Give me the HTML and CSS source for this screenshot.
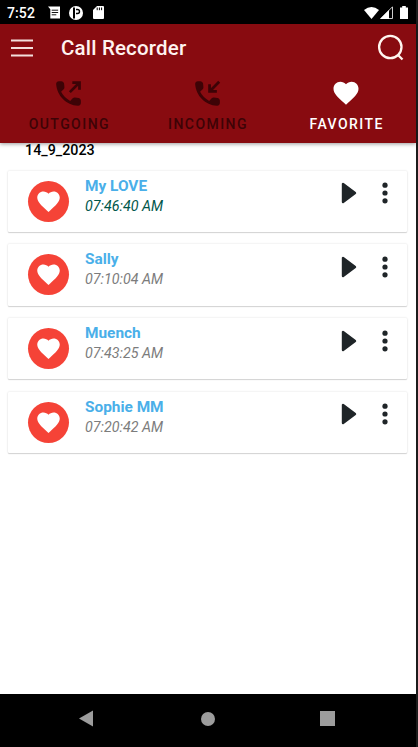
FILE: index.html
```html
<!DOCTYPE html>
<html lang="en">
<head>
<meta charset="utf-8">
<title>Call Recorder</title>
<link rel="stylesheet" href="styles.css">
</head>
<body>
<svg class="defs" aria-hidden="true">
  <symbol id="heart" viewBox="0 0 24 24"><path d="M12 21.35l-1.45-1.32C5.4 15.36 2 12.28 2 8.5 2 5.42 4.42 3 7.5 3c1.74 0 3.41.81 4.5 2.09C13.09 3.81 14.76 3 16.5 3 19.58 3 22 5.42 22 8.5c0 3.78-3.4 6.86-8.55 11.54L12 21.35z"/></symbol>
  <symbol id="phone" viewBox="0 0 24 24"><path d="M19.23 15.26l-2.54-.29c-.61-.07-1.21.14-1.64.57l-1.84 1.84c-2.83-1.44-5.15-3.75-6.59-6.59l1.85-1.85c.43-.43.64-1.03.57-1.64l-.29-2.52c-.12-1.01-.97-1.77-1.99-1.77H5.03c-1.13 0-2.07.94-2 2.07.53 8.54 7.36 15.36 15.89 15.89 1.13.07 2.07-.87 2.07-2v-1.73c.01-1.01-.75-1.86-1.76-1.98z"/></symbol>
  <symbol id="play" viewBox="0 0 16 22"><path d="M2 2v18l12-9z" stroke="currentColor" stroke-width="2.4" stroke-linejoin="round"/></symbol>
  <symbol id="more" viewBox="0 0 6 22"><circle cx="3" cy="3.2" r="2.6"/><circle cx="3" cy="11" r="2.6"/><circle cx="3" cy="18.8" r="2.6"/></symbol>
</svg>
<div class="screen">
  <div class="status">
    <span class="clock">7:52</span>
    <svg class="s-msg" viewBox="0 0 13 13"><path d="M0 0h13v13H2.500V3z"/><path d="M4 4h7M4 6.500h7M4 9h5" stroke="#000" stroke-width="1"/></svg>
    <svg class="s-app" viewBox="0 0 14 14"><circle cx="7" cy="7" r="7"/><path d="M5 1.500v11" fill="none" stroke="#000" stroke-width="2"/><path d="M7 3.500h1.500a2 2 0 0 1 0 4H7" fill="none" stroke="#000" stroke-width="1.400"/></svg>
    <svg class="s-sd" viewBox="0 0 11 13"><path d="M4 0h6q1 0 1 1v11q0 1-1 1H1q-1 0-1-1V4z"/><path d="M4.200 1.500v2.700M6.400 1.500v2.700M8.600 1.500v2.700" stroke="#000"/></svg>
    <svg class="s-wifi" viewBox="0 0 15 12"><path d="M0 3Q7.500-3 15 3L7.500 12z"/></svg>
    <svg class="s-cell" viewBox="0 0 13 13"><path d="M.8 12.500L12.500.8v11.700z" fill="none" stroke="#ccc"/><path d="M0 13L9 4v9z"/></svg>
    <svg class="s-bat" viewBox="0 0 8 13"><path d="M2.200 0h3.600v1.500H8V13H0V1.500h2.200z"/></svg>
  </div>
  <header class="header">
    <div class="appbar">
      <svg class="menu" viewBox="0 0 22 18"><path d="M0 1.500h22M0 9h22M0 16.500h22"/></svg>
      <h1>Call Recorder</h1>
      <svg class="search" viewBox="0 0 28 28"><circle cx="13.300" cy="13" r="11.200"/><path d="M20.500 20.500l5 5"/></svg>
    </div>
    <nav class="tabs">
      <div class="tab">
        <svg class="call" viewBox="0 0 24 24"><use href="#phone"/><path class="arrow" d="M13 11L20 4M14.800 4h5.200v5.200"/></svg>
        <span>OUTGOING</span>
      </div>
      <div class="tab">
        <svg class="call" viewBox="0 0 24 24"><use href="#phone"/><path class="arrow" d="M20.500 3.500L13.500 10.500M13.500 5.200v5.300h5.300"/></svg>
        <span>INCOMING</span>
      </div>
      <div class="tab active">
        <svg class="fav"><use href="#heart"/></svg>
        <span>FAVORITE</span>
      </div>
    </nav>
  </header>
  <main class="list">
    <h2>14_9_2023</h2>
    <article class="card">
      <div class="avatar"><svg><use href="#heart"/></svg></div>
      <div class="info"><strong>My LOVE</strong><em class="fresh">07:46:40 AM</em></div>
      <svg class="play"><use href="#play"/></svg>
      <svg class="more"><use href="#more"/></svg>
    </article>
    <article class="card">
      <div class="avatar"><svg><use href="#heart"/></svg></div>
      <div class="info"><strong>Sally</strong><em>07:10:04 AM</em></div>
      <svg class="play"><use href="#play"/></svg>
      <svg class="more"><use href="#more"/></svg>
    </article>
    <article class="card">
      <div class="avatar"><svg><use href="#heart"/></svg></div>
      <div class="info"><strong>Muench</strong><em>07:43:25 AM</em></div>
      <svg class="play"><use href="#play"/></svg>
      <svg class="more"><use href="#more"/></svg>
    </article>
    <article class="card">
      <div class="avatar"><svg><use href="#heart"/></svg></div>
      <div class="info"><strong>Sophie MM</strong><em>07:20:42 AM</em></div>
      <svg class="play"><use href="#play"/></svg>
      <svg class="more"><use href="#more"/></svg>
    </article>
  </main>
  <footer class="navbar">
    <svg class="back" viewBox="0 0 14 16"><path d="M14 0v16L0 8z"/></svg>
    <span class="home"></span>
    <span class="recent"></span>
  </footer>
</div>
</body>
</html>
```
FILE: styles.css
```css
* { box-sizing: border-box; }
body {
  margin: 0;
  background: #1c1c1c;
  font-family: Roboto, "Liberation Sans", sans-serif;
}
svg { display: block; flex: none; fill: currentColor; }
.defs { display: none; }
.screen {
  width: 416px;
  height: 747px;
  display: flex;
  flex-direction: column;
  background: #fff;
}
.status {
  height: 24px;
  flex: none;
  display: flex;
  align-items: center;
  padding: 1px 8px 0 7px;
  background: #000;
  color: #fff;
}
.clock { width: 41px; font-size: 14px; font-weight: 500; line-height: 24px; padding-top: 1px; letter-spacing: .1px; }
.s-msg { width: 12px; height: 13px; }
.s-app { width: 14px; height: 14px; margin-left: 9px; }
.s-sd { width: 11px; height: 13px; margin-left: 10px; }
.s-wifi { width: 15px; height: 12px; margin-left: auto; }
.s-cell { width: 13px; height: 13px; margin-left: 1px; }
.s-bat { width: 8px; height: 13px; margin-left: 7px; }
.header {
  height: 119px;
  flex: none;
  background: #880b10;
  box-shadow: 0 1px 4px rgba(0, 0, 0, .4);
}
.appbar {
  height: 47px;
  display: flex;
  align-items: center;
  padding: 0 11px;
  color: #fff;
}
.menu { width: 22px; height: 18px; fill: none; stroke: #f3dfdc; stroke-width: 2; }
h1 { margin: 0 0 0 28px; font-size: 20.5px; font-weight: 500; line-height: 24px; letter-spacing: .18px; color: #fff3f0; }
.search { width: 28px; height: 28px; margin-left: auto; fill: none; stroke: #fff5ef; stroke-width: 2.3; }
.tabs { display: grid; grid-template-columns: repeat(3, 1fr); height: 72px; }
.tab {
  display: flex;
  flex-direction: column;
  align-items: center;
  color: #3d0306;
}
.tab.active { color: #fff; }
.tab span { margin-top: auto; margin-bottom: 10px; font-size: 14px; font-weight: 500; line-height: 18px; letter-spacing: 1.45px; }
.call { width: 33px; height: 33px; margin: 6px 1px 0 0; }
.fav { width: 30px; height: 30px; margin: 7px 1px 0 0; }
.arrow { fill: none; stroke: currentColor; stroke-width: 2; }
.list {
  flex: 1;
  padding: 0 9px 0 8px;
  display: flex;
  flex-direction: column;
}
h2 { margin: 0 0 12.7px; height: 15px; padding-left: 17px; font-size: 14.3px; font-weight: 500; line-height: 15px; color: #000; }
.card {
  height: 61.3px;
  margin-bottom: 12.4px;
  display: flex;
  align-items: flex-start;
  padding: 0 19px 0 20px;
  border-radius: 1px;
  background: #fff;
  box-shadow: 0 0 2px rgba(0, 0, 0, .16), 0 1px 1px rgba(0, 0, 0, .14);
}
.avatar {
  width: 41px;
  height: 41px;
  margin-top: 10px;
  display: grid;
  place-items: center;
  border-radius: 50%;
  background: #f54337;
  color: #fff;
}
.avatar svg { width: 27px; height: 27px; }
.info { flex: 1; margin: 5.1px 0 0 16px; display: flex; flex-direction: column; }
.info strong { font-size: 15.4px; font-weight: 700; line-height: 20px; color: #4aafe9; }
.info em { font-size: 14.25px; line-height: 20px; color: #7c7c7c; }
.info .fresh { color: #00564a; }
.play { width: 16px; height: 22px; margin-top: 11.6px; color: #1f2528; }
.more { width: 6px; height: 22px; margin: 11.6px 0 0 25px; color: #1f2528; }
.navbar {
  height: 53px;
  flex: none;
  display: flex;
  align-items: center;
  padding: 0 80px 4px 79px;
  background: #000;
  color: #9c9c9c;
}
.back { width: 14px; height: 17px; }
.home { width: 14px; height: 14px; margin-left: 107.500px; border-radius: 50%; background: currentColor; }
.recent { width: 15px; height: 15px; margin-left: 105.500px; background: currentColor; }
```
